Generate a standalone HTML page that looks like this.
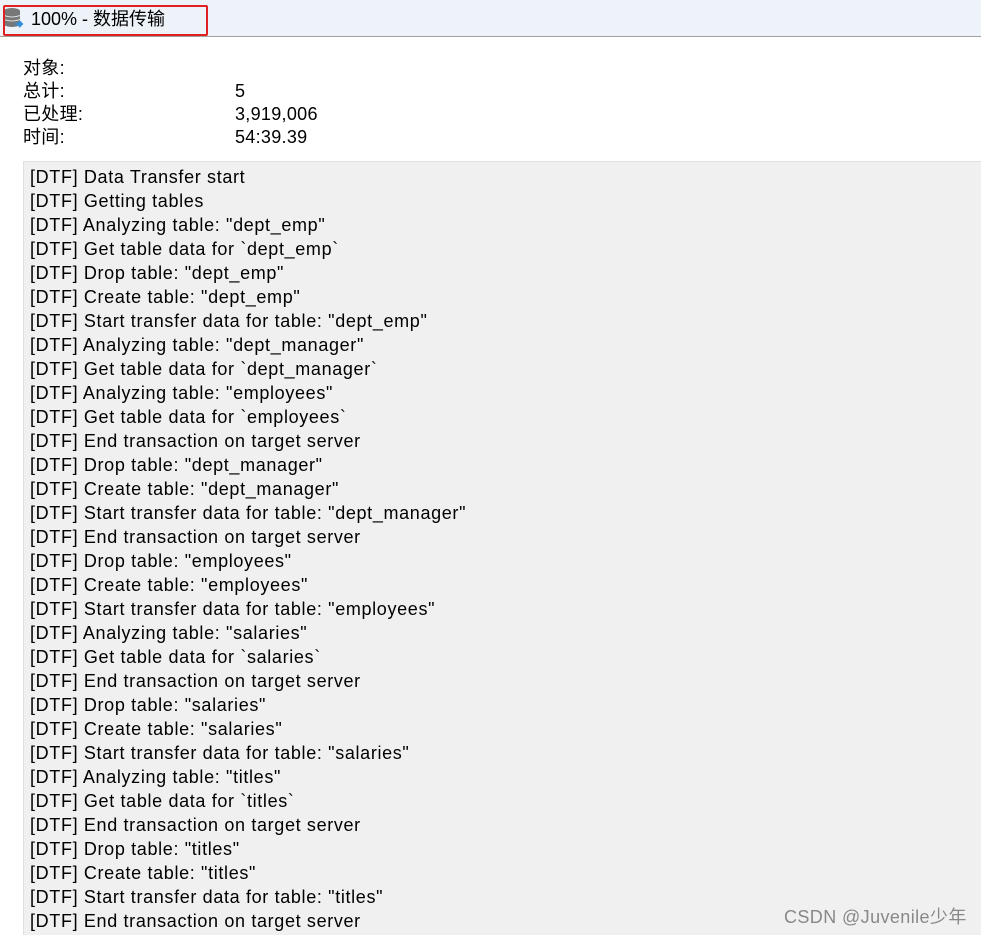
<!DOCTYPE html>
<html><head><meta charset="utf-8"><style>
body{margin:0;width:981px;height:934px;background:#fff;overflow:hidden;font-family:"Liberation Sans","Noto Sans CJK SC",sans-serif;color:#000;position:relative}
.title{position:absolute;left:0;top:0;width:981px;height:36px;background:#eef3f9;border-bottom:1px solid #a0a0a0}
.red{position:absolute;left:3px;top:5px;border:2px solid #e02020;border-radius:2px;box-sizing:border-box;width:205px;height:31px}
.tt{position:absolute;left:31px;top:5px;font-size:18px}
.info{position:absolute;left:23px;font-size:18px;line-height:23px;letter-spacing:0.3px}
.log{position:absolute;left:23px;top:161px;width:958px;height:773px;background:#f0f0f0;border-top:1px solid #e0e0e0;border-left:1px solid #e0e0e0}
.log div{position:absolute;left:6px;font-size:18px;white-space:pre;letter-spacing:0.65px}
.wm{position:absolute;left:784px;top:903px;font-size:18px;color:#888;letter-spacing:0.4px}
</style></head><body>
<div class="title"></div>
<svg style="position:absolute;left:3px;top:7px" width="22" height="22" viewBox="0 0 22 22">
<ellipse cx="9" cy="4" rx="8" ry="3" fill="#777"/><rect x="1" y="4" width="16" height="13" fill="#777"/><ellipse cx="9" cy="17" rx="8" ry="3" fill="#777"/>
<path d="M1 8.5q8 3 16 0M1 12.5q8 3 16 0" stroke="#ddd" fill="none"/>
<path d="M12 17h7M16 14l3 3-3 3" stroke="#2d8fe0" stroke-width="2" fill="none"/></svg>
<div class="red"></div>
<div class="tt">100% - 数据传输</div>
<div class="info" style="top:57px">对象:</div>
<div class="info" style="top:80px">总计:</div><div class="info" style="top:80px;left:235px">5</div>
<div class="info" style="top:103px">已处理:</div><div class="info" style="top:103px;left:235px">3,919,006</div>
<div class="info" style="top:126px">时间:</div><div class="info" style="top:126px;left:235px">54:39.39</div>
<div class="log" id="log"></div>
<div class="wm">CSDN @Juvenile少年</div>
<script>
var L=['Data Transfer start','Getting tables','Analyzing table: "dept_emp"','Get table data for `dept_emp`','Drop table: "dept_emp"','Create table: "dept_emp"','Start transfer data for table: "dept_emp"','Analyzing table: "dept_manager"','Get table data for `dept_manager`','Analyzing table: "employees"','Get table data for `employees`','End transaction on target server','Drop table: "dept_manager"','Create table: "dept_manager"','Start transfer data for table: "dept_manager"','End transaction on target server','Drop table: "employees"','Create table: "employees"','Start transfer data for table: "employees"','Analyzing table: "salaries"','Get table data for `salaries`','End transaction on target server','Drop table: "salaries"','Create table: "salaries"','Start transfer data for table: "salaries"','Analyzing table: "titles"','Get table data for `titles`','End transaction on target server','Drop table: "titles"','Create table: "titles"','Start transfer data for table: "titles"','End transaction on target server'];
var h='';L.forEach(function(t,i){h+='<div style="top:'+(5+i*24)+'px">[DTF] '+t.replace(/</g,'&lt;')+'</div>'});
document.getElementById('log').innerHTML=h;
</script>
</body></html>
